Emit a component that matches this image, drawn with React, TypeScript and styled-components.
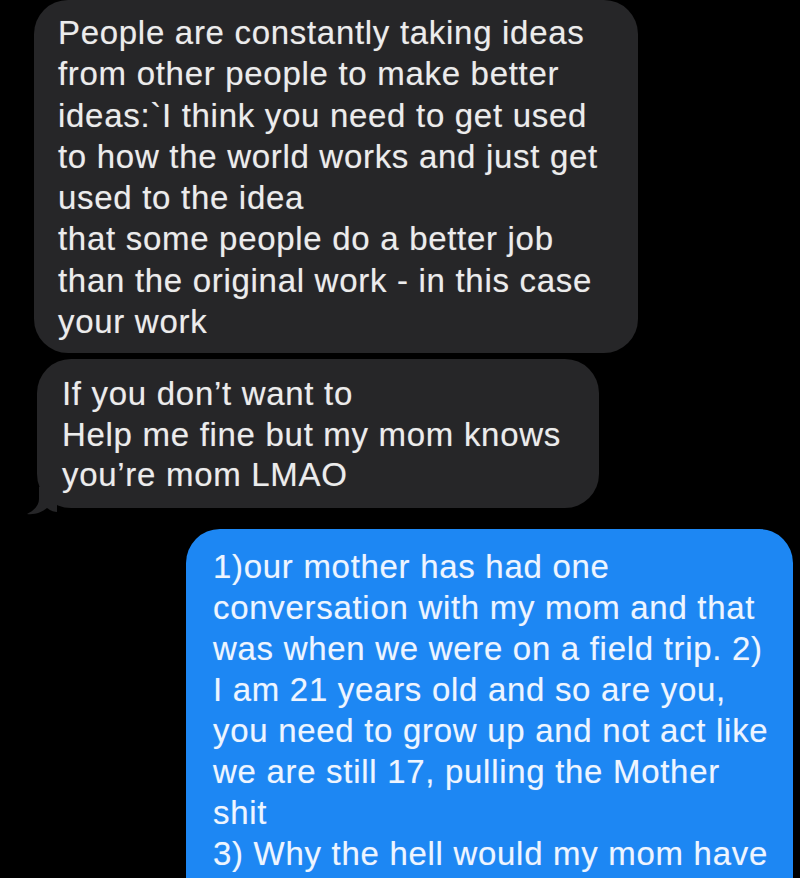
import React from "react";
import styled, { createGlobalStyle } from "styled-components";

const Global = createGlobalStyle`
  html, body { margin: 0; padding: 0; background: #000; }
  body { overflow: hidden; }
`;

const Screen = styled.div`
  width: 800px;
  height: 878px;
  background: #000;
  overflow: hidden;
  display: flex;
  flex-direction: column;
  font-family: "Liberation Sans", Arial, sans-serif;
`;

const Row = styled.div<{ $side: "left" | "right"; $gap: number; $inset: number }>`
  display: flex;
  justify-content: ${(p) => (p.$side === "left" ? "flex-start" : "flex-end")};
  margin-top: ${(p) => p.$gap}px;
  padding-left: ${(p) => (p.$side === "left" ? p.$inset : 0)}px;
  padding-right: ${(p) => (p.$side === "right" ? p.$inset : 0)}px;
`;

const Bubble = styled.div<{
  $tone: "gray" | "blue";
  $width: number;
  $pad: string;
  $lh: number;
}>`
  position: relative;
  box-sizing: border-box;
  width: ${(p) => p.$width}px;
  padding: ${(p) => p.$pad};
  border-radius: 34px;
  background: ${(p) => (p.$tone === "gray" ? "#262628" : "#1d87f3")};
  color: ${(p) => (p.$tone === "gray" ? "#ececec" : "#eef5ff")};
  font-size: 33px;
  letter-spacing: 0.7px;
  line-height: ${(p) => p.$lh}px;
  white-space: pre;
  text-shadow: 0 0 1px rgba(255, 255, 255, 0.35);
`;

const OpenBubble = styled(Bubble)`
  border-bottom-left-radius: 0;
  border-bottom-right-radius: 0;
  min-height: 360px;
`;

const Line = styled.div``;

const Tail = styled.svg`
  position: absolute;
  left: -10px;
  bottom: -7px;
  width: 30px;
  height: 28px;
`;

const first = [
  "People are constantly taking ideas",
  "from other people to make better",
  "ideas:`I think you need to get used",
  "to how the world works and just get",
  "used to the idea",
  "that some people do a better job",
  "than the original work - in this case",
  "your work",
];

const second = [
  "If you don\u2019t want to",
  "Help me fine but my mom knows",
  "you\u2019re mom LMAO",
];

const third = [
  "1)our mother has had one",
  "conversation with my mom and that",
  "was when we were on a field trip. 2)",
  "I am 21 years old and so are you,",
  "you need to grow up and not act like",
  "we are still 17, pulling the Mother",
  "shit",
  "3) Why the hell would my mom have",
];

export default function App() {
  return (
    <>
      <Global />
      <Screen>
        <Row $side="left" $gap={0} $inset={34}>
          <Bubble $tone="gray" $width={604} $pad="12px 20px 11px 24px" $lh={41.3}>
            {first.map((l, i) => (
              <Line key={i}>{l}</Line>
            ))}
          </Bubble>
        </Row>
        <Row $side="left" $gap={6} $inset={37}>
          <Bubble $tone="gray" $width={562} $pad="15px 20px 12px 25px" $lh={40.5}>
            {second.map((l, i) => (
              <Line key={i}>{l}</Line>
            ))}
            <Tail viewBox="0 0 30 28">
              <path
                d="M12 0 L12 12 C12 18 8 23 0 27 C8 28 15 25 20 21 C24 24 28 25 30 25 L30 0 Z"
                fill="#262628"
              />
            </Tail>
          </Bubble>
        </Row>
        <Row $side="right" $gap={21} $inset={7}>
          <OpenBubble $tone="blue" $width={607} $pad="17px 20px 0 27px" $lh={41}>
            {third.map((l, i) => (
              <Line key={i}>{l}</Line>
            ))}
          </OpenBubble>
        </Row>
      </Screen>
    </>
  );
}
